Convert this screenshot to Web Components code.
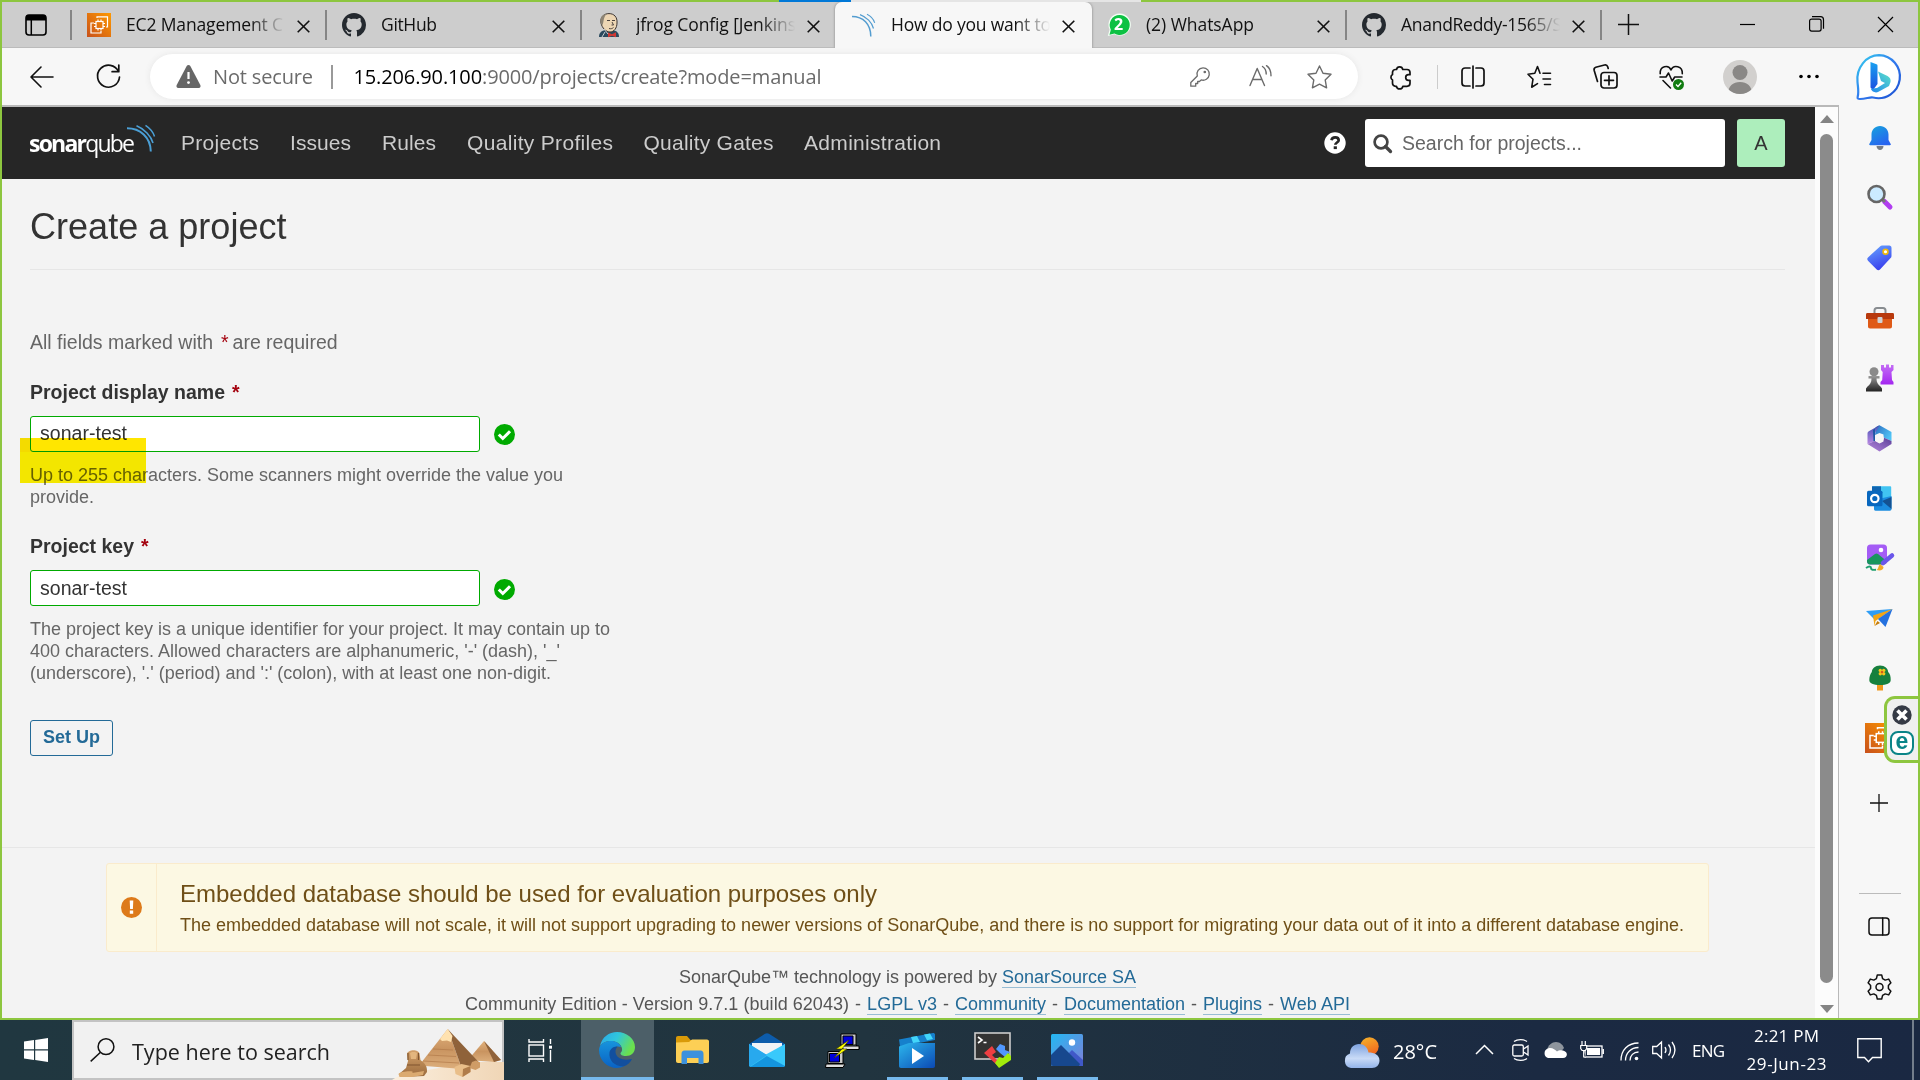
<!DOCTYPE html>
<html lang="en">
<head>
<meta charset="utf-8">
<title>How do you want to create your project?</title>
<style>
html,body{margin:0;padding:0;width:1920px;height:1080px;overflow:hidden}
body{font-family:"Liberation Sans",Arial,sans-serif}
</style>
</head>
<body>
<desktop-screen></desktop-screen>
<script>
const UI='"Open Sans","Noto Sans",sans-serif';
function define(name,css,html,after){
  const t=document.createElement('template');
  t.innerHTML='<style>*{box-sizing:border-box}'+css+'</style>'+(typeof html==='string'?html:'');
  customElements.define(name,class extends HTMLElement{
    constructor(){super();this.attachShadow({mode:'open'}).appendChild(t.content.cloneNode(true));}
    connectedCallback(){if(after)after.call(this,this.shadowRoot);}
  });
}

const EC2=`<defs><linearGradient id="e" x1="0" y1="1" x2="1" y2="0"><stop stop-color="#c8511b"/><stop offset="1" stop-color="#f90"/></linearGradient></defs><rect width="24" height="24" fill="url(#e)"/><g fill="none" stroke="#fff" stroke-width="1.2"><rect x="9" y="8.5" width="7" height="7"/><path d="M11 8.500v-2M14 8.500v-2M11 17.500v-2M14 17.500v-2M9 10.500h-2M9 13.500h-2M18 10.500h-2M18 13.500h-2"/><path d="M10 5V3.800h10.500V14H19M7 10H4v10h10v-2"/></g>`;
const CAT=`<path fill="#24292f" d="M8 0C3.580 0 0 3.580 0 8c0 3.540 2.290 6.530 5.470 7.590.4.070.55-.17.55-.38 0-.19-.01-.82-.01-1.490-2.010.37-2.530-.49-2.690-.94-.09-.23-.48-.94-.82-1.130-.28-.15-.68-.52-.01-.53.63-.01 1.080.58 1.230.82.72 1.210 1.870.87 2.330.66.07-.52.28-.87.51-1.070-1.780-.2-3.640-.89-3.640-3.950 0-.87.31-1.590.82-2.150-.08-.2-.36-1.020.08-2.120 0 0 .67-.21 2.200.82.64-.18 1.320-.27 2-.27s1.360.09 2 .27c1.530-1.040 2.200-.82 2.200-.82.44 1.100.16 1.920.08 2.120.51.56.82 1.270.82 2.150 0 3.070-1.870 3.750-3.650 3.950.29.25.54.73.54 1.480 0 1.070-.01 1.930-.01 2.200 0 .21.15.46.55.38A8.010 8.010 0 0 0 16 8c0-4.420-3.580-8-8-8z"/>`;
const S=(w,d)=>`<g fill="none" stroke="currentColor" stroke-width="${w}" stroke-linecap="round" stroke-linejoin="round">${d}</g>`;
/* name: [width, height, viewBox, markup] */
const ICONS={
 workspace:[22,22,'0 0 22 22',`<rect x="1" y="1" width="20" height="20" rx="3" fill="none" stroke="#000" stroke-width="1.600"/><path d="M1 6.500V4a3 3 0 0 1 3-3h14a3 3 0 0 1 3 3v2.500z"/><path d="M6.300 6v15" stroke="#000" stroke-width="1.500"/>`],
 ec2:[24,24,'0 0 24 24',EC2], ec2big:[30,30,'0 0 24 24',EC2], github:[24,24,'0 0 16 16',CAT],
 jenkins:[22,24,'0 0 22 24',`<path d="M1 24c0-4 2-6 6-7l8 0c4 1 6 3 6 7z" fill="#2b4a5e"/><path d="M3 10C2 4 6 .6 11 .6S19.500 4 19 10c0 5-3 9-7 9S4 15 3 10z" fill="#edd6b4" stroke="#3c3431" stroke-width="1"/><path d="M3 11C1 4 5 1 9 .8 5 4 6 9 4.500 12z" fill="#8d8474"/><path d="M9 7.500h3M14 7.500h3M14 9l1.500 3h-2M11 15.500c2 .6 3.500 0 4.500-1" stroke="#3c3431" stroke-width=".9" fill="none"/><path d="M10 19.500l4 1.700 4-2v5l-4-1.500-4 1.500z" fill="#d33833"/><path d="M6 16l4 5M7 19l-3 5" stroke="#eee" stroke-width=".8"/>`],
 sonartab:[23,23,'0 0 23 23',`<g fill="none" stroke="#549dd0" stroke-width="1.500"><path d="M0 2.500C11 2.500 18.800 10 18.800 22.500"/><path d="M8 .6C14.500 3 20 8.500 21.500 14.500" stroke-width="1.200"/><path d="M15 .3C18.500 2 21.500 5 22.700 8.800" stroke-width="1.100"/></g>`],
 whatsapp:[24,24,'0 0 24 24',`<path d="M13 .6a11 11 0 1 1-5.500 20.600L.8 23l1.800-6.500A11 11 0 0 1 13 .6z" fill="#f2fff4"/><path d="M12.500 2a10 10 0 1 1-5 18.500L2.500 21.700l1.300-5A10 10 0 0 1 12.500 2z" fill="#0dc143"/>`],
 x:[13,13,'0 0 13 13',`<path d="M.7.7l11.600 11.600M12.300.7L.7 12.300" stroke="#111" stroke-width="1.600"/>`],
 plus:[21,21,'0 0 21 21',`<path d="M10.500 0v21M0 10.500h21" stroke="#111" stroke-width="1.500"/>`],
 min:[15,15,'0 0 15 15',`<path d="M0 7.500h15" stroke="#000" stroke-width="1.200"/>`],
 restore:[15,16,'0 0 15 16',`<rect x=".6" y="3.100" width="11.500" height="12" rx="2" fill="none" stroke="#000" stroke-width="1.200"/><path d="M3 .7h8.500a3 3 0 0 1 3 3v9" fill="none" stroke="#000" stroke-width="1.200"/>`],
 close:[15,15,'0 0 15 15',`<path d="M0 0l15 15M15 0L0 15" stroke="#000" stroke-width="1.200"/>`],
 back:[24,22,'0 0 24 22',S(1.600,'<path d="M23 11H1.500M11 1L1 11l10 10"/>')],
 reload:[25,25,'0 0 25 25',S(1.700,'<path d="M22.500 7.500A11 11 0 1 0 23.500 13M22.800 1v6.700h-6.700"/>')],
 warn:[25,23,'0 0 25 23',`<path d="M12.500 0c.8 0 1.400.4 1.800 1.100l10 19C25 21.500 24.300 23 22.700 23H2.300C.7 23 0 21.500.7 20.100l10-19C11.100.4 11.700 0 12.500 0z" fill="#666"/><path d="M12.500 7v7" stroke="#fff" stroke-width="2.200"/><circle cx="12.500" cy="17.600" r="1.400" fill="#fff"/>`],
 key:[20,20,'0 0 20 20',S(1.300,'<path d="M13 .8a6.200 6.200 0 1 1-1.800 12.100L9.500 14.500H7.700v2H5.700v2.700H.8v-3.700l6.500-6.500A6.200 6.200 0 0 1 13 .8z"/><circle cx="14.800" cy="5" r=".7"/>')],
 aloud:[23,21,'0 0 23 21',S(1.400,'<path d="M1 20.500L8.200 3.500l7.300 17M3.500 14.500h9.500"/><path d="M13.500 1.500c2.500 1.600 3.700 4.200 3.700 7.500M17.500.7c3 2 4.500 5.500 4.500 10"/>')],
 star:[25,24,'0 0 25 24',S(1.400,'<path d="M12.500 1l3.500 7.200 8 1.100-5.800 5.600 1.400 7.900-7.100-3.700-7.100 3.700 1.400-7.900L1 9.300l8-1.100z"/>')],
 puzzle:[22,24,'0 0 22 24',S(1.700,'<path d="M7.500 4.500a3.200 3.200 0 0 1 6.300 0h4.200a3 3 0 0 1 3 3v2.200h-1.500a2.800 2.800 0 0 0 0 5.600H21v3a3 3 0 0 1-3 3h-4.200a3.200 3.200 0 0 1-6.300 0H6.500a3 3 0 0 1-3-3v-3.300a3.200 3.200 0 0 1 0-5.500V7.500a3 3 0 0 1 3-3z"/>')],
 split:[24,24,'0 0 24 24',S(1.700,'<path d="M9 3H4a3 3 0 0 0-3 3v12a3 3 0 0 0 3 3h5M15 3h5a3 3 0 0 1 3 3v12a3 3 0 0 1-3 3h-5M12 1v22"/>')],
 favs:[25,24,'0 0 25 24',S(1.600,'<path d="M16 8.200h7.500M16 14h7.500M17.500 19.500h6M13 8.200L10.500 1.500 7.800 8.200l-6.800 1 5 5-1.300 8 5.800-3.600"/>')],
 collect:[25,25,'0 0 25 25',S(1.700,'<rect x="8" y="8.500" width="16" height="15.500" rx="3"/><path d="M16 11.800v9M11.500 16.300h9M4.500 17.500L1.200 6.500C.8 5 1.300 3.800 2.800 3.300L11.500 1c1.500-.4 2.700.3 3.200 1.800l.5 1.700"/>')],
 heart:[25,25,'0 0 25 25',S(1.600,'<path d="M1.200 8.800C.6 1 9.500-.8 12 5c2.500-5.800 11.800-4 11.300 3.800M1 12h6l2.500-4 3.700 8 2.500-4H23M4 15.500l7.500 7.500"/>')+`<circle cx="19.500" cy="19.500" r="5.500" fill="#107c10"/><path d="M17 19.500l2 2 3.200-3.700" stroke="#fff" stroke-width="1.300" fill="none"/>`],
 person:[34,34,'0 0 34 34',`<defs><clipPath id="p"><circle cx="17" cy="17" r="17"/></clipPath></defs><g clip-path="url(#p)"><rect width="34" height="34" fill="#d2d0ce"/><circle cx="17" cy="12.500" r="7.500" fill="#8a8886"/><path d="M5 34c0-8 5-12 12-12s12 4 12 12z" fill="#8a8886"/></g>`],
 dots:[20,5,'0 0 20 5',`<circle cx="2" cy="2.500" r="1.800"/><circle cx="10" cy="2.500" r="1.800"/><circle cx="18" cy="2.500" r="1.800"/>`],
 bing:[46,47,'0 0 46 47',`<defs><linearGradient id="a" x1="0" y1="0" x2="1" y2="1"><stop stop-color="#35d0ee"/><stop offset=".5" stop-color="#3179ee"/><stop offset="1" stop-color="#1b4fd0"/></linearGradient><linearGradient id="b" x1="0" y1="0" x2="0" y2="1"><stop stop-color="#1aa1f0"/><stop offset="1" stop-color="#1c4fe0"/></linearGradient><linearGradient id="c" x1="1" y1="0" x2="0" y2="1"><stop stop-color="#5ce2c8"/><stop offset="1" stop-color="#1f86ee"/></linearGradient></defs><path d="M23 1.200a21.500 21.500 0 1 1-6 42.300c-3.500-.6-7 1.500-13 1.500-2 0-2.800-.5-2.300-2.300C3 38 2 34 1.500 28 0 14 10 1.200 23 1.200z" fill="#fff" stroke="url(#a)" stroke-width="2.200"/><path d="M14.500 8l6 2.300c.8.300 1 .8 1 1.600V30l-4.500 6-2.500-2.500z" fill="url(#b)"/><path d="M22 17.500l9.500 4.500c2.500 1.300 3.500 3.500 3 6L33 32l-10.500 5.800c-3 1.600-6.500 0-7.700-3l6.200-.8 8-5-4-2z" fill="url(#c)"/>`],
 bell:[22,26,'0 0 22 26',`<defs><linearGradient id="a" x1="0" y1="0" x2="0.600" y2="1"><stop stop-color="#16a5dc"/><stop offset="1" stop-color="#2764f0"/></linearGradient></defs><path d="M7.500 21h7c0 2-1.500 4-3.500 4s-3.500-2-3.500-4z" fill="#777c85"/><path d="M11 1c5 0 8.500 3.800 8.500 8.500V15l2.200 4c.3.800 0 1.200-.8 1.200H1.100c-.8 0-1.100-.4-.8-1.200L2.500 15V9.500C2.500 4.800 6 1 11 1z" fill="url(#a)"/>`],
 mag:[26,26,'0 1 26 26',`<path d="M17.500 17.500l5.500 5.500" stroke="#b13df0" stroke-width="5" stroke-linecap="round"/><path d="M15 15l3 3" stroke="#777" stroke-width="3"/><circle cx="9.500" cy="10" r="8" fill="#cbeaff" stroke="#666" stroke-width="2.600"/>`],
 tag:[25,26,'0 0 25 26',`<defs><linearGradient id="a" x1="0" y1="0" x2=".4" y2="1"><stop stop-color="#67a7ff"/><stop offset="1" stop-color="#3b42ee"/></linearGradient></defs><path d="M13 1.500c.6-.6 1.300-.9 2.200-.9h7c1.400 0 2.300.9 2.300 2.300v8c0 .9-.3 1.600-.9 2.200L13 24.400c-1 1-2.300 1-3.300 0L1 15.700c-1-1-1-2.300 0-3.300z" fill="url(#a)"/><circle cx="18.500" cy="6.800" r="2.400" fill="#fff" stroke="#f0b90b" stroke-width="1.700"/>`],
 tools:[28,22,'0 0 28 22',`<path d="M8.500 7V3.500C8.500 2 9.500 1 11 1h6c1.500 0 2.500 1 2.500 2.500V7" fill="none" stroke="#888c90" stroke-width="2"/><path d="M2 8h24v11.500c0 1.300-.8 2-2 2H4c-1.200 0-2-.7-2-2z" fill="#df5a17"/><path d="M1.500 6h25c1 0 1.500.5 1.500 1.500V12H0V7.500C0 6.500.5 6 1.500 6z" fill="#b83a0e"/><rect x="11.500" y="10" width="5" height="6" rx="1" fill="#d0d2d5"/>`],
 chess:[29,29,'0 0 29 29',`<defs><linearGradient id="a" x1="0" y1="0" x2="0" y2="1"><stop stop-color="#999"/><stop offset="1" stop-color="#222"/></linearGradient><linearGradient id="b" x1="0" y1="0" x2="0" y2="1"><stop stop-color="#c46ef5"/><stop offset="1" stop-color="#a326f0"/></linearGradient></defs><path d="M16 1h3v2.500h2V.5h3v3h2v-2.500h2.500v5L26.500 8l.5 8 1.500 2v2.500H15.500V18l1.700-2 .5-8L16 6z" fill="url(#b)"/><circle cx="9" cy="7.700" r="4.500" fill="#8a8a8a"/><path d="M3.500 12h11v2.500h-3c0 4 1.500 6 4 8l1.500 2v3H1v-3L2.500 22.500c2.500-2 4-4 4-8h-3z" fill="url(#a)"/>`],
 m365:[25,27,'0 0 25 27',`<defs><linearGradient id="a" x1="0" y1="0" x2="1" y2=".6"><stop stop-color="#2c6cc0"/><stop offset="1" stop-color="#4fc3f5"/></linearGradient><linearGradient id="b" x1="0" y1="0" x2="0" y2="1"><stop stop-color="#4a55b5"/><stop offset="1" stop-color="#b786e2"/></linearGradient><linearGradient id="c" x1="0" y1="1" x2="1" y2="0"><stop stop-color="#b889e0"/><stop offset="1" stop-color="#5b3f98"/></linearGradient></defs><path d="M9 2l3.500-1.700L24.500 7v9l-8-3.500V9.500L12.500 8 8 10z" fill="url(#a)"/><path d="M12.500 .3L1.800 6.300C1 6.800.5 7.500.5 8.500v10.500L8 16V8z" fill="url(#b)"/><path d="M12.500 .3L8 3v13l-1.500.6L6 5z" fill="#1f56a4"/><path d="M.5 19L8 16l4.500 2.500 4-2 0-4L24.500 16v3L12.500 26.500z" fill="url(#c)"/><circle cx="12.500" cy="13.300" r="4.300" fill="#f7f7f7"/>`],
 outlook:[25,25,'0 0 25 25',`<path d="M5 1.500C5 .8 5.500.3 6.200.3H23c.7 0 1.200.5 1.200 1.200V14H5z" fill="#41c4f2"/><path d="M5 .3h9V6H5z" fill="#0f65b1"/><path d="M7 14l17.500-4v13c0 1-.7 1.700-1.700 1.700H8.500C7.500 24.700 7 24 7 23z" fill="#1c8de0"/><path d="M15 15l9.500-4v12z" fill="#145292"/><rect y="4.800" width="15.500" height="15.500" rx="1.500" fill="#0867be"/><circle cx="7.800" cy="12.500" r="3.700" fill="none" stroke="#fff" stroke-width="2.200"/>`],
 design:[29,28,'0 0 29 28',`<rect x="2" y=".5" width="20" height="20" rx="3.500" fill="#a45cf5"/><path d="M2 16l8-6c1-.8 2-.8 3 0l8.500 7c-.3 2-1.500 3.500-3.500 3.500H5c-2 0-3-1.500-3-3.500z" fill="#18965e"/><circle cx="16" cy="6" r="2.300" fill="#fff"/><path d="M0 21h15v7H0z" fill="#f7f7f7"/><path d="M18 19L27 11.500" stroke="#6a56ea" stroke-width="4.500" stroke-linecap="round"/><path d="M11.500 26c2-1 1.500-4 3.500-6l3.500 3c0 3-3 4-7 3z" fill="#f0aa2a"/><path d="M1 24c3-2 5-2 5 0s2 2 5 1.800" stroke="#20a070" stroke-width="2" fill="none"/>`],
 plane:[27,20,'0 0 27 20',`<path d="M0 3L26.500 1 9 12z" fill="#2e9df5"/><path d="M7 7.500L26.500 1 9.500 13 8.500 18z" fill="#f2a516"/><path d="M12 11L26.500 1l-7 18z" fill="#2471df"/><path d="M8.500 18l3-5 2.500 2z" fill="#c57d0c"/>`],
 tree:[22,27,'0 0 22 27',`<path d="M8 18h6v7.500H8z" fill="#f0981c"/><path d="M11 .5c5 0 8 3 8.200 6.500 1.800 1.700 2.600 4.500 2.500 8 0 3.300-4 5-10.700 5S.3 18.300.3 15c0-3 .8-6 2.500-8C3 3.500 6 .5 11 .5z" fill="#17803d"/><g fill="#f8c41c"><circle cx="11.300" cy="5.400" r="1.700"/><circle cx="11.300" cy="8.800" r="1.700"/><circle cx="14.700" cy="5.400" r="1.700"/><circle cx="14.700" cy="8.800" r="1.700"/></g><circle cx="13" cy="7.100" r="1.200" fill="#e0521a"/>`],
 sideplus:[18,18,'0 0 18 18',`<path d="M9 0v18M0 9h18" stroke="#111" stroke-width="1.300"/>`],
 panel:[22,19,'0 0 22 19',S(1.500,'<rect x="1" y="1" width="20" height="17" rx="3"/><path d="M14.700 1v17"/>')],
 gear:[25,26,'0 0 25 26',S(1.500,'<circle cx="12.500" cy="13" r="3.500"/><path d="M10.300 1h4.400l.9 3.600 2.600 1.500 3.500-1 2.200 3.700-2.500 2.700v3l2.500 2.700-2.200 3.700-3.500-1-2.600 1.500-.9 3.600h-4.400l-.9-3.600-2.600-1.500-3.500 1-2.200-3.700 2.500-2.700v-3L1.100 8.800l2.200-3.700 3.500 1 2.600-1.500z"/>')],
 badx:[20,20,'0 0 20 20',`<circle cx="10" cy="10" r="9.700" fill="#353a45"/><path d="M5.500 5.500l9 9M14.500 5.500l-9 9" stroke="#fff" stroke-width="3.600"/>`],
 help:[22,22,'0 0 22 22',`<circle cx="11" cy="11" r="10.700" fill="#fff"/><path d="M7.500 8.300c.3-2 1.700-3 3.700-3 2.100 0 3.500 1.200 3.500 2.900 0 2.300-3.400 2.300-3.400 4.600" fill="none" stroke="#262626" stroke-width="2.700"/><rect x="9.700" y="14.300" width="3.200" height="2.800" fill="#262626"/>`],
 search:[19,19,'0 0 19 19',`<circle cx="8" cy="8" r="6.400" fill="none" stroke="#444" stroke-width="2.700"/><path d="M12.500 12.500l5 5" stroke="#444" stroke-width="3.300" stroke-linecap="round"/>`],
 check:[21,21,'0 0 21 21',`<circle cx="10.500" cy="10.500" r="10.500" fill="#0a0"/><path d="M4.800 10.500l4 4 7.200-7.200" fill="none" stroke="#fff" stroke-width="3"/>`],
 alert:[21,21,'0 0 21 21',`<circle cx="10.500" cy="10.500" r="10.500" fill="#dd7a1a"/><path d="M8.700 3.500h3.600l-.4 8.500H9.100zM8.800 13.600h3.400v3.200H8.800z" fill="#fff"/>`],
 logo:[28,27,'0 0 28 27',`<g fill="none" stroke="#4b9fd5"><path d="M0 3.200C13 3.200 23.600 12 23.800 26.500" stroke-width="2"/><path d="M9.500.8C17.500 4 24 11 26 18" stroke-width="1.600"/><path d="M18.500.4C22.500 3 26 6.500 27.500 11.500" stroke-width="1.500"/></g>`],
 win:[24,24,'0 0 24 24',`<path d="M0 3.500L10 2v9.300H0zM11.200 1.900L24 0v11.300H11.200zM0 12.500h10V22L0 20.500zM11.200 12.500H24V24l-12.800-1.900z" fill="#fff"/>`],
 lens:[25,24,'0 0 25 24',`<circle cx="16" cy="8.700" r="7.900" fill="none" stroke="#111" stroke-width="1.500"/><path d="M10.500 14.300L.7 23.400" stroke="#111" stroke-width="1.500"/>`],
 pyramid:[112,51,'0 0 112 51',`<defs><linearGradient id="a" x1="0" y1="0" x2="0" y2="1"><stop stop-color="#e2b27c"/><stop offset=".5" stop-color="#c99460"/><stop offset="1" stop-color="#dcae7c"/></linearGradient><linearGradient id="b" x1="0" y1="0" x2="1" y2="0"><stop stop-color="#fbeedd"/><stop offset="1" stop-color="#f0d6b6"/></linearGradient><linearGradient id="c" x1="0" y1="0" x2="0" y2="1"><stop stop-color="#d3a16a"/><stop offset="1" stop-color="#9a6a3c"/></linearGradient></defs><path d="M0 51c8-6 18-8 30-9l50-9h32v18z" fill="url(#b)"/><path d="M92 12L76 31l26 2 7-2z" fill="url(#a)"/><path d="M92 12l17 19-7 2z" fill="#8f623a"/><path d="M55.700 0L27 36.500l43 3.500z" fill="url(#a)"/><path d="M55.700 0L88 34.500 70 40z" fill="#8f623a"/><path d="M55.700 0L48 10l2 2 5-.5 4 1.500 1.500-6z" fill="#ffe2b0"/><path d="M41 20l20 1M36 26l28 1.500M31 32l36 2" stroke="#b27a49" stroke-width=".7"/><path d="M15 25c1-5 12-5 12.500 0l1 6c4 3 7 6 6.500 12l-3 4-22 1-3-3 7-6 2-7z" fill="url(#c)"/><path d="M18 24c1-1.500 6-1.500 7 0l-1 6h-5z" fill="#e3b67e"/><path d="M16 24v7M26.500 24v7M15 36h13" stroke="#80552e" stroke-width="1.200"/><path d="M6.500 45c2-2 8-3 14-2.500v5.500h-13zM20 44l12-2-1 4-11 2z" fill="#dbaa70"/><path d="M80 33l4-1.500 4 2v5l-4.500 2.500-6-2z" fill="#cf9c66"/><path d="M62.500 38l7-3 9 2v6l-8 5-7-3z" fill="#e9be89"/><path d="M71 40l7.500-3v6l-8 5z" fill="#b07c4a"/>`],
 taskview:[24,23,'0 0 24 23',`<g fill="none" stroke="#fff" stroke-width="1.400"><rect x="1" y="6" width="14.500" height="11"/><path d="M1 0v3h14.500V0M1 23v-3h14.500v3M22.500 0v5M22.500 11v12"/></g><rect x="21" y="6.700" width="3" height="3" fill="#fff"/>`],
 edge:[36,36,'0 0 36 36',`<defs><linearGradient id="a" x1="0" y1="0" x2="1" y2=".4"><stop stop-color="#2aa6e8"/><stop offset=".5" stop-color="#30c6dc"/><stop offset="1" stop-color="#6be04e"/></linearGradient><linearGradient id="b" x1="0" y1="0" x2="0" y2="1"><stop stop-color="#1794dc"/><stop offset="1" stop-color="#0a62c4"/></linearGradient></defs><path d="M1 14C3 5 10 0 18 0c10 0 18 7 18 15 0 6-4 9-9 9-4 0-5.500-1.500-5.500-2.500 0-1 2-2 1.500-5C22.500 12 17 9 12 9 7 9 3 11 1 14z" fill="url(#a)"/><path d="M1 14c2-3 6-5 11-5 5 0 9 2.500 10 6-6-2-10 2-10 7 0 7 6 12 13 12-2 1.300-4.500 2-7 2C8 36 0 28 0 18c0-1.500.4-2.800 1-4z" fill="url(#b)"/><path d="M18.500 14.500c-5 5.500-1 16 14.500 12.500-1.500 3.500-5 6.500-9 7.500C15 34 9.500 28 10.500 20.500c.6-3.500 4-6.500 8-6z" fill="#124f9e"/>`],
 folder:[33,28,'0 0 33 28',`<path d="M0 2C0 .8.8 0 2 0h9l3.500 4H16v5H0z" fill="#d99a08"/><path d="M0 6.500l13-.5 3-2.500h15c1 0 2 .8 2 2V25c0 1-.8 2-2 2H2c-1.200 0-2-1-2-2z" fill="#fdcf55"/><path d="M5.500 28V18c0-2 1-3.500 3-3.500h16c2 0 3 1.500 3 3.500v10h-5v-6H11v6z" fill="#3c91dc"/>`],
 mail:[36,34,'0 0 36 34',`<path d="M0 11L16 .8c1.300-.8 2.700-.8 4 0L36 11v3H0z" fill="#0d5cab"/><path d="M3 10h30v14H3z" fill="#f1f3f6"/><path d="M0 11l36 23H2c-1.200 0-2-.8-2-2z" fill="#35c1f1"/><path d="M36 11v21c0 1.200-.8 2-2 2H1.200z" fill="#1495df"/><path d="M16 22L36 11v22z" fill="#39c9fb"/><path d="M0 11l18 11-17 11.500Q0 33 0 32z" fill="#28a9ee"/>`],
 putty:[35,35,'0 0 35 35',`<g stroke="#000" stroke-width="1"><path d="M16 1h15v13H16z" fill="#c9c9c9"/><path d="M16 12h15l3.500 3H19z" fill="#aaa"/><path d="M15 13h19v3.500H19z" fill="#ddd"/><path d="M18 3h10v8.500H18z" fill="#00d"/><path d="M3 18.500h15v12H3z" fill="#c9c9c9"/><path d="M1 31h19l-2 3.500H.5z" fill="#ddd"/><path d="M4.500 20.500h10v8.500h-10z" fill="#00d"/></g><path d="M24 7L11 16h6L9 25l13-9h-5z" fill="#ff0" stroke="#330" stroke-width=".6"/>`],
 movies:[36,35,'0 0 36 35',`<defs><linearGradient id="a" x1="0" y1="0" x2="1" y2="1"><stop stop-color="#2cb6ec"/><stop offset="1" stop-color="#0b49b4"/></linearGradient></defs><path d="M0 6.500L34 0c1 0 2 .5 2 1.500V7L1 13.500z" fill="#1680cc"/><path d="M12 4l6-1.100 3 6L14 10zM25 1.600l6-1L34 6l-6 1.200z" fill="#43d6fa"/><path d="M0 13.500L10 10h26v23c0 1.200-.8 2-2 2H2c-1.200 0-2-.8-2-2z" fill="url(#a)"/><path d="M13 15l12 8-12 8z" fill="#fff"/>`],
 term:[37,36,'0 0 37 36',`<rect x="1" y="1" width="35" height="26" fill="#333" stroke="#ccc" stroke-width="1.600"/><path d="M4 5l4 3-4 3M9.500 10.500h3" stroke="#fff" stroke-width="1.600" fill="none"/><path d="M18 14l4 6-4 3 8 8-2 3L10 21z" fill="#ef3f42"/><path d="M26 12l5 2v4l5 2-5 5-5-4-4-4z" fill="#5197ff"/><path d="M25 25l4 1 5-5 3 3v4L25 36l-4-5z" fill="#a1ec0b"/>`],
 photos:[32,32,'0 0 32 32',`<defs><linearGradient id="a" x1="0" y1="0" x2="1" y2="1"><stop stop-color="#22b8f2"/><stop offset="1" stop-color="#807ed8"/></linearGradient></defs><rect width="32" height="32" rx="1.500" fill="url(#a)"/><path d="M18 19l3-3 11 10v6H20z" fill="#4058c8"/><path d="M0 21l10-10L29 30l-1 2H2c-1.200 0-2-.8-2-2z" fill="#17488e"/><circle cx="21" cy="8.500" r="3.200" fill="#fff"/>`],
 weather:[37,31,'0 0 37 31',`<defs><linearGradient id="a" x1="0" y1="0" x2="0" y2="1"><stop stop-color="#7da2df"/><stop offset=".6" stop-color="#c9dbf7"/><stop offset="1" stop-color="#93b4ea"/></linearGradient><linearGradient id="b" x1="0" y1="0" x2=".4" y2="1"><stop stop-color="#f5b52b"/><stop offset="1" stop-color="#f06a1f"/></linearGradient></defs><circle cx="26.500" cy="9.500" r="9.200" fill="url(#b)"/><path d="M8 31a7.500 7.500 0 0 1-1-14.500C7 10.500 11 7 16 7s8.500 3 9.500 8.500c6 0 11 2.500 11 8 0 4.500-3 7.500-7.500 7.500z" fill="url(#a)"/>`],
 chevron:[19,11,'0 0 19 11',`<path d="M1 10l8.500-8.500L18 10" fill="none" stroke="#fff" stroke-width="1.500"/>`],
 cam:[17,22,'0 0 17 22',`<g fill="none" stroke="#fff" stroke-width="1.300"><rect x=".8" y="6" width="10.500" height="11" rx="1.500"/><path d="M11.500 10l4.500-3v9l-4.500-3M2 2.500c3.500-2.500 9.500-2.500 13 0M2 19.500c3.500 2.500 9.500 2.500 13 0"/></g>`],
 cloud:[24,16,'0 0 24 16',`<path d="M4 8c1-5 5-8 9-8s7 3 8 6l-5 6z" fill="#8e959d"/><path d="M5 16a5 5 0 0 1 0-9.500C9 5 12 8 14 9.500c2-2 9-2 9.900 2.500 0 2.500-1.500 4-3.900 4z" fill="#fff"/>`],
 batt:[24,17,'0 0 24 17',`<rect x="5" y="5" width="17" height="11" fill="none" stroke="#fff" stroke-width="1.300"/><rect x="7" y="7" width="13" height="7" fill="#fff"/><path d="M23.200 8v5" stroke="#fff" stroke-width="1.500"/><path d="M.7 4.500h6v3L5.300 9.500H2.100L.7 7.500zM2 4V0M5.300 4V0M3.700 9.500V16H6" fill="#1c2b40" stroke="#fff" stroke-width="1.200"/>`],
 wifi:[20,19,'0 0 20 19',`<g fill="none" stroke="#fff" stroke-width="1.300"><path d="M1 18.500C1 8 8 1 18.500 1M5.500 18.500C5.500 11 11 5.500 18.500 5.500M10 18.500c0-5 3.500-8.500 8.500-8.500"/></g><circle cx="16.500" cy="16.500" r="1.800" fill="#fff"/>`],
 sound:[24,18,'0 0 24 18',`<g fill="none" stroke="#fff" stroke-width="1.300"><path d="M.7 5.500h4L9.500 1v16l-4.800-4.500h-4zM13 6c1.300 2 1.300 4 0 6M16.500 3.500c2.500 3.500 2.500 7.500 0 11M20 1c3.700 5 3.700 11 0 16"/></g>`],
 note:[25,25,'0 0 25 25',`<path d="M.8.8h23.400v18.700h-8.700l-4 4.300-4-4.300H.8z" fill="none" stroke="#fff" stroke-width="1.400"/>`],
 up:[14,8,'0 0 14 8',`<path d="M7 0l7 8H0z" fill="#858585"/>`],
 down:[14,8,'0 0 14 8',`<path d="M7 8l7-8H0z" fill="#858585"/>`]
};

define('desktop-screen',`:host{display:block;width:1920px;height:1080px}`,
 `<browser-window></browser-window><task-bar></task-bar>`);

define('browser-window',`:host{display:flex;flex-direction:column;width:1920px;height:1020px;border:2px solid #8dc63f;border-top:0;background:#f7f7f7}
 .strip{display:flex;height:2px;margin:0 -2px}.strip i{background:#8dc63f}
 .body{display:flex;flex:1;min-height:0}
 .main{width:1837px;display:flex;flex-direction:column}
 .view{display:flex;flex:1;min-height:0;border-top:2px solid #b9b9b9;border-right:1px solid #b9b9b9}
 .page{width:1813px;background:#f3f3f3;overflow:hidden}`,
 `<div class="strip"><i style="width:779px"></i><i style="width:72px;background:#0078d7"></i><i style="width:290px;background:#e5e5e5"></i><i style="flex:1"></i></div>
 <tab-strip></tab-strip>
 <div class="body"><div class="main"><address-row></address-row>
 <div class="view"><div class="page"><sonar-header></sonar-header><sonar-form></sonar-form><sonar-footer></sonar-footer></div><scroll-bar></scroll-bar></div></div>
 <edge-sidebar></edge-sidebar></div>`);

define('tab-strip',`:host{display:flex;align-items:stretch;height:46px;background:#cdcdcd;box-shadow:inset 0 -1px #bbb;font-family:${UI};font-size:17.500px;color:#111}
 .ws{width:68px;display:flex;align-items:center;padding-left:23px}
 .c{display:flex;align-items:center}`,
 `<div class="ws"><ui-icon name="workspace"></ui-icon></div>
 <app-tab icon="ec2" fade><fit-text w="157">EC2 Management C</fit-text></app-tab>
 <app-tab icon="github"><fit-text w="56">GitHub</fit-text></app-tab>
 <app-tab icon="jenkins" fade><fit-text w="160">jfrog Config [Jenkins</fit-text></app-tab>
 <app-tab icon="sonartab" active fade><fit-text w="160">How do you want to</fit-text></app-tab>
 <app-tab icon="whatsapp" badge="2" nosep><fit-text w="108">(2) WhatsApp</fit-text></app-tab>
 <app-tab icon="github" fade><fit-text w="161">AnandReddy-1565/S</fit-text></app-tab>
 <app-tab last></app-tab>
 <div class="c" style="margin-left:16.500px;margin-top:-2px"><ui-icon name="plus"></ui-icon></div>
 <div class="c" style="margin-left:101px;margin-top:-2px;gap:54px"><ui-icon name="min"></ui-icon><ui-icon name="restore"></ui-icon><ui-icon name="close"></ui-icon></div>`);

define('app-tab',`:host{display:flex;align-items:center;width:255px;position:relative}
 :host([last]){width:1px}:host([last]) .i,:host([last]) .t,:host([last]) .x{display:none}
 .s{width:1.500px;height:30px;background:#858585;flex:none}
 :host([active]){background:#f7f7f7;border-radius:7px 7px 0 0;box-shadow:-1px 0 2px #aaa,1px 0 2px #aaa;clip-path:inset(0 -3px 0 -3px);z-index:1;width:257px;margin-right:-2px}
 :host([active]) .s,:host([nosep]) .s{background:transparent}
 .i{width:24px;margin-left:15px;display:flex;justify-content:center;position:relative}
 .b{position:absolute;inset:0;font:700 16px/23px ${UI};color:#fff;text-align:center}
 .t{width:159px;margin-left:15.500px;margin-top:-2px;overflow:hidden;white-space:nowrap}
 :host([fade]) .t{-webkit-mask-image:linear-gradient(90deg,#000 78%,transparent 100%);mask-image:linear-gradient(90deg,#000 78%,transparent 100%)}
 .x{margin-left:12px;margin-top:2px;display:flex}`,
 `<span class="s"></span><span class="i"></span><span class="t"><slot></slot></span><span class="x"><ui-icon name="x"></ui-icon></span>`,
 function(r){const n=this.getAttribute('icon'),b=this.getAttribute('badge');if(n)r.querySelector('.i').innerHTML=`<ui-icon name="${n}"></ui-icon>`+(b?`<span class="b">${b}</span>`:'');});

define('address-row',`:host{display:flex;align-items:center;height:57px;padding:0 0 0 28px;font-family:${UI};font-size:20px;color:#111}
 .pill{display:flex;align-items:center;width:1208px;height:45px;border-radius:23px;background:#fff;margin-left:29px;padding-left:26px;box-shadow:0 0 6px #e6e6e6;color:#6b6b6b}
 b{font-weight:400;color:#000}.v{width:1.500px;height:24px;background:#999}`,
 `<ui-icon name="back"></ui-icon><ui-icon name="reload" style="margin-left:41.500px"></ui-icon>
 <div class="pill"><ui-icon name="warn"></ui-icon><fit-text w="100" style="margin-left:12.500px">Not secure</fit-text><span class="v" style="margin:0 21px 0 18px"></span><fit-text w="468"><b>15.206.90.100</b>:9000/projects/create?mode=manual</fit-text>
 <span style="flex:1"></span><ui-icon name="key"></ui-icon><ui-icon name="aloud" style="margin-left:39px;margin-top:-3px"></ui-icon><ui-icon name="star" style="margin:0 25.500px 0 35.500px"></ui-icon></div>
 <ui-icon name="puzzle" style="margin-left:31px"></ui-icon><span class="v" style="margin:0 23px 0 26px;background:#ccc"></span>
 <ui-icon name="split"></ui-icon><ui-icon name="favs" style="margin-left:41.500px"></ui-icon><ui-icon name="collect" style="margin-left:41.500px"></ui-icon><ui-icon name="heart" style="margin-left:41px;margin-top:2px"></ui-icon>
 <ui-icon name="person" style="margin-left:39px"></ui-icon><ui-icon name="dots" style="margin-left:42px"></ui-icon>`);

define('sonar-header',`:host{display:flex;align-items:center;height:72px;background:#262626;color:#ccc;font-size:21px;padding-left:28px}
 .logo{width:151px;display:flex;align-items:center;height:72px;color:#fff}
 .w{font-family:${UI};font-size:23px;line-height:30px;margin-left:-1px}
 .w b{font-weight:700}
 .s{width:360px;height:48px;border-radius:3px;background:#fff;color:#666;display:flex;align-items:center;padding-left:8px;font-size:19.500px;margin-left:19px}
 .a{width:48px;height:48px;border-radius:3px;background:#adeebc;color:#333;display:flex;align-items:center;justify-content:center;margin:0 30px 0 12px;font-size:20px}`,
 `<div class="logo"><fit-text class="w" w="106"><b>sonar</b>qube</fit-text><ui-icon name="logo" style="margin:-10px 0 0 -8px"></ui-icon></div>
 <fit-text w="78">Projects</fit-text><fit-text w="61" style="margin-left:31px">Issues</fit-text><fit-text w="54" style="margin-left:31px">Rules</fit-text><fit-text w="146" style="margin-left:31px">Quality Profiles</fit-text><fit-text w="130" style="margin-left:30.500px">Quality Gates</fit-text><fit-text w="137" style="margin-left:30.500px">Administration</fit-text>
 <span style="flex:1"></span><ui-icon name="help"></ui-icon><div class="s"><ui-icon name="search"></ui-icon><fit-text w="180" style="margin-left:10px">Search for projects...</fit-text></div><div class="a">A</div>`);

define('sonar-form',`:host{display:block;position:relative;height:668px;padding:26px 30px 0 28px;color:#666;font-size:19.500px;box-sizing:border-box}
 h1{margin:0 0 20px;font:400 36px/44px "Liberation Sans",Arial,sans-serif;color:#333}
 hr{border:0;height:1px;background:#e6e6e6;margin:0 0 60px}
 .req{line-height:24px;height:24px;white-space:nowrap}em{color:#a4030f;font-style:normal}
 .btn{display:flex;width:83px;height:36px;border:1.500px solid #236a97;border-radius:3px;align-items:center;justify-content:center;color:#236a97;font-weight:700;font-size:18px;margin-top:36px;padding-bottom:1px}
 .hl{position:absolute;left:18px;top:259px;width:126px;height:45px;background:linear-gradient(#ffe600 14px,#fff200 14px);mix-blend-mode:multiply}`,
 `<h1><fit-text w="256.500">Create a project</fit-text></h1><hr>
 <div class="req"><fit-text w="183">All fields marked with</fit-text><em style="margin:0 4px 0 8px">*</em><fit-text w="105">are required</fit-text></div>
 <form-field label="Project display name" lw="195" value="sonar-test" style="margin-top:26px"><fit-text w="533">Up to 255 characters. Some scanners might override the value you</fit-text><br>provide.</form-field>
 <form-field label="Project key" lw="104" value="sonar-test" low style="margin-top:26px"><fit-text w="580">The project key is a unique identifier for your project. It may contain up to</fit-text><br><fit-text w="530">400 characters. Allowed characters are alphanumeric, '-' (dash), '_'</fit-text><br><fit-text w="521">(underscore), '.' (period) and ':' (colon), with at least one non-digit.</fit-text></form-field>
 <div class="btn"><fit-text w="57">Set Up</fit-text></div><div class="hl"></div>`);

define('form-field',`:host{display:block}
 .l{height:24px;line-height:24px;font-weight:700;color:#333}.l em{font-style:normal;color:#a4030f;margin-left:7px}
 .r{display:flex;align-items:center;margin-top:12px}.in{width:450px;height:36px;border:1.500px solid #0a0;border-radius:3px;background:#fff;color:#333;padding:0 0 1px 9px;display:flex;align-items:center}
 :host([low]) .in{padding-bottom:0;padding-top:1px}
 ui-icon{margin:1px 0 0 13.500px}:host([low]) ui-icon{margin-top:3px}.h{font-size:18px;line-height:22px;margin-top:12px;white-space:nowrap}`,
 `<div class="l"></div><div class="r"><div class="in"></div><ui-icon name="check"></ui-icon></div><div class="h"><slot></slot></div>`,
 function(r){r.querySelector('.l').innerHTML=`<fit-text w="${this.getAttribute('lw')}">${this.getAttribute('label')}</fit-text><em>*</em>`;
  r.querySelector('.in').innerHTML=`<fit-text w="87">${this.getAttribute('value')}</fit-text>`;});

define('sonar-footer',`:host{display:block;border-top:1px solid #e6e6e6;padding-top:15px;font-size:18px;color:#666}
 .b{display:flex;width:1603px;height:89px;margin:0 0 0 104px;border:1px solid #faebcc;border-radius:3px;background:#fcf8e3;color:#6f4f17}
 .i{width:50px;border-right:1px solid #faebcc;display:flex;align-items:center;justify-content:center}
 .t{padding:14px 0 0 23px;display:flex;flex-direction:column}.t fit-text{height:31px;line-height:32px}
 .f{display:flex;flex-direction:column;align-items:center;padding:12px 2px 0 0;line-height:26px;color:#555}
 .f>*{height:27px}.l2{display:flex;width:885px}.l2 i{flex:1;font-style:normal;text-align:center}
 .l2 fit-text,.f a{line-height:20px}a{color:#236a97;border-bottom:1px solid #98bdd4}.l2>fit-text{line-height:26px}`,
 `<div class="b"><div class="i"><ui-icon name="alert"></ui-icon></div><div class="t"><fit-text w="697" style="font-size:24px">Embedded database should be used for evaluation purposes only</fit-text><fit-text w="1504">The embedded database will not scale, it will not support upgrading to newer versions of SonarQube, and there is no support for migrating your data out of it into a different database engine.</fit-text></div></div>
 <div class="f"><fit-text w="457">SonarQube™ technology is powered by <a>SonarSource SA</a></fit-text>
 <div class="l2"><fit-text w="384">Community Edition - Version 9.7.1 (build 62043)</fit-text><i>-</i><fit-text w="70"><a>LGPL v3</a></fit-text><i>-</i><fit-text w="91"><a>Community</a></fit-text><i>-</i><fit-text w="121"><a>Documentation</a></fit-text><i>-</i><fit-text w="59"><a>Plugins</a></fit-text><i>-</i><fit-text w="70"><a>Web API</a></fit-text></div></div>`);

define('scroll-bar',`:host{display:flex;flex-direction:column;align-items:center;width:23px;background:#fcfcfc;padding:8px 0 5px 0;box-sizing:border-box}
 i{width:13px;height:849px;border-radius:7px;background:#8b8b8b;margin:11px 0 22px}`,
 `<ui-icon name="up"></ui-icon><i></i><ui-icon name="down"></ui-icon>`);

define('edge-sidebar',`:host{display:flex;flex-direction:column;align-items:center;width:79px;height:970px;position:relative;color:#111}
 .c{height:60px;display:flex;align-items:center;justify-content:center;flex:none;padding-left:2px}
 hr{width:42px;height:1px;border:0;background:#bbb;margin:0 0 0 2px}
 .o{position:absolute;right:0;top:648px;width:34px;height:67px;border:3px solid #8dc63f;border-right:0;border-radius:11px 0 0 11px;background:#f0f0f0;display:flex;flex-direction:column;align-items:center;gap:6px;padding:6px 1px 0 0}
 .e{width:24px;height:24px;border:2px solid #0a8488;border-radius:8px;background:#fff;color:#0a8488;font:700 23px/17px "Liberation Sans",Arial,sans-serif;text-align:center}`,
 `<ui-icon name="bing" style="margin:6px 0 7px 1px"></ui-icon>
 ${['bell','mag','tag','tools','chess','m365','outlook','design','plane','tree','ec2big'].map(n=>`<div class="c"><ui-icon name="${n}"></ui-icon></div>`).join('')}
 <div class="c" style="height:70px;padding-left:1px"><ui-icon name="sideplus"></ui-icon></div>
 <hr style="margin-top:55px"><ui-icon name="panel" style="margin:23px 0 0 1px"></ui-icon><ui-icon name="gear" style="margin:38px 0 0 1px"></ui-icon>
 <div class="o"><ui-icon name="badx"></ui-icon><div class="e">e</div></div>`);

define('task-bar',`:host{display:flex;height:60px;background:linear-gradient(90deg,#203740 0,#21343f 45%,#1b2a42 80%,#1a2842);color:#fff;font-family:${UI};align-items:center;position:relative}
 .st{width:72px;display:flex;justify-content:center}
 .se{width:432px;height:60px;background:#f1f1f1;border:2px solid #c3c3c3;display:flex;align-items:center;padding-left:16px;color:#222;font-size:21.500px}
 .tv{width:77px;display:flex;justify-content:center;padding-right:5px}
 .k{width:75px;height:60px;display:flex;align-items:center;justify-content:center;position:relative;padding-right:1px}
 .run::after{content:"";position:absolute;left:7px;right:7px;bottom:0;height:3px;background:#76b9ed}
 .act{width:73px;margin-right:1px;background:#4c5f68}.act::after{left:0;right:0}
 .tr{display:flex;align-items:center;flex:1}
 .clk{width:82px;display:flex;flex-direction:column;align-items:center;font-size:17px;line-height:28px;margin-left:20.500px}
 .end{width:2px;height:60px;background:#737e8c;margin-left:30px}`,
 `<div class="st"><ui-icon name="win"></ui-icon></div>
 <div class="se"><ui-icon name="lens"></ui-icon><fit-text w="198" style="margin-left:17px;margin-top:2px">Type here to search</fit-text><ui-icon name="pyramid" style="margin:9px -2px 0 auto"></ui-icon></div>
 <div class="tv"><ui-icon name="taskview"></ui-icon></div>
 <div class="k run act"><ui-icon name="edge"></ui-icon></div><div class="k"><ui-icon name="folder"></ui-icon></div><div class="k"><ui-icon name="mail"></ui-icon></div><div class="k"><ui-icon name="putty"></ui-icon></div><div class="k run"><ui-icon name="movies"></ui-icon></div><div class="k run"><ui-icon name="term"></ui-icon></div><div class="k run"><ui-icon name="photos"></ui-icon></div>
 <div class="tr"><ui-icon name="weather" style="margin-left:238px;margin-top:4px"></ui-icon><fit-text w="44" style="margin-left:13px;font-size:20px;margin-top:3px">28°C</fit-text>
 <ui-icon name="chevron" style="margin-left:38px;margin-top:-2px"></ui-icon><ui-icon name="cam" style="margin-left:18px"></ui-icon><ui-icon name="cloud" style="margin-left:14px"></ui-icon><ui-icon name="batt" style="margin-left:13px;margin-top:-2px"></ui-icon><ui-icon name="wifi" style="margin-left:16px;margin-top:2px"></ui-icon><ui-icon name="sound" style="margin-left:12px"></ui-icon><fit-text w="33" style="margin-left:16px;font-size:17px">ENG</fit-text>
 <div class="clk"><fit-text w="65">2:21 PM</fit-text><fit-text w="80">29-Jun-23</fit-text></div><ui-icon name="note" style="margin-left:29px"></ui-icon><span class="end"></span></div>`);

define('ui-icon',`:host{display:inline-block;flex:none;line-height:0}svg{display:block;overflow:visible}`,'',
 function(r){const i=ICONS[this.getAttribute('name')];r.querySelector('svg')?.remove();r.append(...new DOMParser().parseFromString(`<body><svg width="${i[0]}" height="${i[1]}" viewBox="${i[2]}">${i[3]}</svg>`,'text/html').body.children);});

/* Tracks its text so that it spans the width given in w. */
define('fit-text',`:host{display:inline-block;white-space:nowrap;flex:none}span{display:inline-block}`,`<span><slot></slot></span>`,
 function(r){const s=r.querySelector('span'),w=+this.getAttribute('w'),n=this.textContent.length;
  s.style.letterSpacing='0px';const d=(w-s.getBoundingClientRect().width)/(n-1);
  s.style.letterSpacing=d+'px';s.style.marginRight=(-d)+'px';});
</script>
</body>
</html>
